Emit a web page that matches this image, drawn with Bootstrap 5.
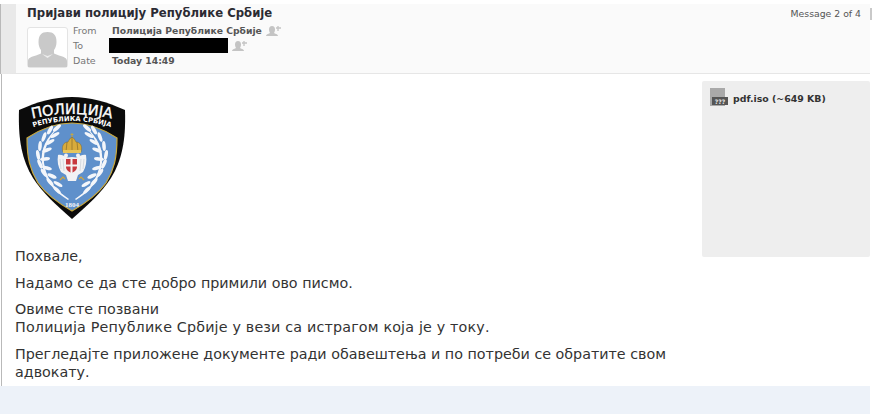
<!DOCTYPE html>
<html lang="sr">
<head>
    <meta charset="UTF-8">
    <meta name="viewport" content="width=device-width, initial-scale=1.0">
    <link href="https://cdn.jsdelivr.net/npm/bootstrap@5.3.2/dist/css/bootstrap.min.css" rel="stylesheet">
    <title>Пријави полицију Републике Србије</title>
    <style>
        body {
            background-color: #ffffff;
            color: #333333;
            font-family: "DejaVu Sans", Verdana, sans-serif;
            overflow: hidden;
        }
        .mail-page {
            width: 870px;
            height: 414px;
            padding-top: 4px;
        }
        .mail-head {
            height: 70px;
            margin-left: 1px;
            background-color: #fafafa;
            border-left: 15px solid #e9e9e9;
            border-bottom: 1px solid #e6e6e6;
            box-shadow: -1px 0 0 #b9b9b9;
            padding: 1px 0 0 11px;
        }
        .mail-subject {
            font-size: 11.7px;
            font-weight: 700;
            line-height: 16px;
            color: #2b2b33;
        }
        .mail-position {
            font-size: 9.3px;
            line-height: 14px;
            color: #555555;
            padding-top: 2px;
            gap: 9px;
        }
        .position-bar {
            width: 2px;
            height: 12px;
            margin: 1px -2px 0 0;
            background-color: #c9c9c9;
        }
        .avatar-box {
            width: 41px;
            height: 41px;
            background-color: #ffffff;
            border: 1px solid #e4e4e4;
            border-radius: 3px;
            margin-top: 6px;
        }
        .meta-block {
            padding-top: 2px;
        }
        .meta-label {
            width: 39px;
            font-size: 9.5px;
            color: #777777;
        }
        .meta-row {
            height: 15px;
            font-size: 9.25px;
            line-height: 15px;
        }
        .meta-value {
            font-weight: 700;
            color: #555555;
        }
        .redacted {
            width: 119px;
            height: 15px;
            background-color: #000000;
            margin-left: -3px;
        }
        .mail-body {
            height: 312px;
            margin-left: 1px;
            border-left: 1px solid #b9b9b9;
        }
        .mail-text {
            width: 683px;
            padding: 23px 0 0 13px;
            font-size: 14.3px;
            line-height: 18px;
            color: #333333;
        }
        .mail-text p {
            margin-bottom: 8.5px;
        }
        .line-wide {
            letter-spacing: 0.17px;
        }
        .mail-logo {
            display: block;
            margin: 0 0 27px 2px;
        }
        .attach-box {
            width: 168px;
            height: 176px;
            margin-top: 7px;
            background-color: #eeeeee;
            border-radius: 2px;
            padding: 7px 8px;
            font-size: 9.4px;
            font-weight: 700;
            line-height: 21px;
            color: #333333;
            gap: 5px;
        }
        .mail-foot {
            height: 28px;
            background-color: #edf2f9;
        }
    </style>
</head>
<body>
<div class="mail-page">
    <div class="mail-head d-flex justify-content-between">
        <div>
            <div class="mail-subject">Пријави полицију Републике Србије</div>
            <div class="d-flex" style="gap: 5px">
                <div class="avatar-box">
                    <svg class="d-block" width="39" height="39" viewBox="0 0 39 39">
                        <path d="M0 39v-6c0-3 3-4 8-5.500l5-2v-3.500c-1.500-2-2.500-4.500-2.500-8C10.500 7 13.500 4 19.500 4s9 3 9 10c0 3.500-1 6-2.500 8v3.500l5 2c5 1.500 8 2.500 8 5.500v6z" fill="#c9c9c9"/>
                        <path d="M14 26l5.500 4 5.500-4-5.500 2z" fill="#eeeeee"/>
                    </svg>
                </div>
                <div class="meta-block">
                    <div class="meta-row d-flex align-items-center">
                        <span class="meta-label">From</span>
                        <span class="meta-value">Полиција Републике Србије</span>
                        <svg class="ms-1" width="16" height="12" viewBox="0 0 16 12"><path d="M6 1c2 0 3 1.500 3 3.500S8 8 8 8c2 1 4 1.500 4 3H0c0-1.500 2-2 4-3 0 0-1-1.500-1-3.500S4 1 6 1z" fill="#c4c4c4"/><path d="M12 1v5M10 3h5" stroke="#c4c4c4" stroke-width="1.300"/></svg>
                    </div>
                    <div class="meta-row d-flex align-items-center">
                        <span class="meta-label">To</span>
                        <span class="redacted"></span>
                        <svg class="ms-1" width="16" height="12" viewBox="0 0 16 12"><path d="M6 1c2 0 3 1.500 3 3.500S8 8 8 8c2 1 4 1.500 4 3H0c0-1.500 2-2 4-3 0 0-1-1.500-1-3.500S4 1 6 1z" fill="#c4c4c4"/><path d="M12 1v5M10 3h5" stroke="#c4c4c4" stroke-width="1.300"/></svg>
                    </div>
                    <div class="meta-row d-flex align-items-center">
                        <span class="meta-label">Date</span>
                        <span class="meta-value">Today 14:49</span>
                    </div>
                </div>
            </div>
        </div>
        <div class="mail-position d-flex">
            <span>Message 2 of 4</span>
            <span class="position-bar"></span>
        </div>
    </div>
    <div class="mail-body d-flex justify-content-between">
        <div class="mail-text">
            <svg class="mail-logo" width="110" height="123" viewBox="0 0 110 123">
                <defs>
                    <path id="arcTop" d="M6 24Q55 10 104 24"/>
                    <path id="arcSub" d="M8 33Q55 15 102 33"/>
                    <g id="branch" fill="#f4f6fa">
                        <ellipse cx="40" cy="31" rx="5" ry="1.800" transform="rotate(-40 40 31)"/>
                        <ellipse cx="33" cy="33" rx="5" ry="1.800" transform="rotate(-60 33 33)"/>
                        <ellipse cx="38" cy="38" rx="5" ry="1.800" transform="rotate(-30 38 38)"/>
                        <ellipse cx="27" cy="40" rx="5" ry="1.800" transform="rotate(-70 27 40)"/>
                        <ellipse cx="33" cy="45" rx="5" ry="1.800" transform="rotate(-30 33 45)"/>
                        <ellipse cx="23" cy="49" rx="5" ry="1.800" transform="rotate(-85 23 49)"/>
                        <ellipse cx="30" cy="53" rx="5" ry="1.800" transform="rotate(-20 30 53)"/>
                        <ellipse cx="21" cy="58" rx="5" ry="1.800" transform="rotate(80 21 58)"/>
                        <ellipse cx="28" cy="62" rx="5" ry="1.800" transform="rotate(-5 28 62)"/>
                        <ellipse cx="23" cy="67" rx="5" ry="1.800" transform="rotate(65 23 67)"/>
                        <ellipse cx="30" cy="71" rx="5" ry="1.800" transform="rotate(15 30 71)"/>
                        <ellipse cx="27" cy="76" rx="5" ry="1.800" transform="rotate(55 27 76)"/>
                        <ellipse cx="35" cy="79" rx="5" ry="1.800" transform="rotate(25 35 79)"/>
                        <ellipse cx="33" cy="85" rx="5" ry="1.800" transform="rotate(50 33 85)"/>
                        <ellipse cx="41" cy="87" rx="5" ry="1.800" transform="rotate(30 41 87)"/>
                        <ellipse cx="40" cy="93" rx="5" ry="1.800" transform="rotate(45 40 93)"/>
                        <path d="M51 103C38 95 27 84 25 66 23 52 30 40 41 30 32 41 26 53 27 66 29 83 40 94 52 102z"/>
                    </g>
                </defs>
                <path d="M2 13C20 5 37 0 55 0s35 5 53 13c1 30-3 50-14 68-9 14-24 28-39 41C40 109 25 95 16 81 5 63 1 43 2 13z" fill="#0b0b0b"/>
                <path d="M10 41C25 31 40 26 55 26s30 5 45 15c0 20-3 32-11 45-8 11-20 20-34 28C41 106 29 97 21 86 13 73 10 61 10 41z" fill="#5f90cb" stroke="#c9a83c" stroke-width="1.200"/>
                <text font-family="'DejaVu Sans', sans-serif" font-size="14.500" fill="#ffffff" stroke="#ffffff" stroke-width="0.350"><textPath href="#arcTop" startOffset="50%" text-anchor="middle">ПОЛИЦИЈА</textPath></text>
                <text font-family="'DejaVu Sans', sans-serif" font-size="6.800" font-weight="700" fill="#ffffff"><textPath href="#arcSub" startOffset="50%" text-anchor="middle">РЕПУБЛИКА СРБИЈА</textPath></text>
                <use href="#branch"/>
                <use href="#branch" transform="translate(110 0) scale(-1 1)"/>
                <path d="M46 55c-2-6 1-10 5-10 1-2 2-4 4-5 2 1 3 3 4 5 4 0 7 4 5 10z" fill="#d8ab3c" stroke="#7c6a35" stroke-width="0.500"/>
                <path d="M55 40v15M50 45l-1 10M60 45l1 10" stroke="#8a6d28" stroke-width="0.700" fill="none"/>
                <path d="M55 36v4M53.500 37.500h3" stroke="#c9a83c" stroke-width="0.900"/>
                <rect x="46" y="53" width="18" height="3" fill="#e8c65c"/>
                <path d="M55 60c-2 0-4 1-6 0-2-1-5-3-8-2-1 6 0 12 3 17l5 3 2 6h8l2-6 5-3c3-5 4-11 3-17-3-1-6 1-8 2-2 1-4 0-6 0z" fill="#f2f2f4"/>
                <circle cx="49" cy="58.500" r="2" fill="#f2f2f4"/>
                <circle cx="61" cy="58.500" r="2" fill="#f2f2f4"/>
                <path d="M43 62l1 10M46 62l1 12M67 62l-1 10M64 62l-1 12" stroke="#c9ced6" stroke-width="0.700"/>
                <path d="M49 62h11v8c0 3-3 5-5.500 6-2.500-1-5.500-3-5.500-6z" fill="#c8393f"/>
                <path d="M53.500 62h2v14h-2zM49 67.500h11v2H49z" fill="#f4f4f4"/>
                <path d="M43 83l3-3 2 2M67 83l-3-3-2 2" stroke="#d3a53a" stroke-width="1.200" fill="none"/>
                <text x="55" y="109.500" font-family="'Liberation Serif', serif" font-size="7" font-weight="700" fill="#f2f5fa" text-anchor="middle">1804</text>
            </svg>
            <p>Похвале,</p>
            <p>Надамо се да сте добро примили ово писмо.</p>
            <p>Овиме сте позвани<br><span class="line-wide">Полиција Републике Србије у вези са истрагом која је у току.</span></p>
            <p>Прегледајте приложене документе ради обавештења и по потреби се обратите свом адвокату.</p>
        </div>
        <div class="attach-box d-flex align-items-start">
            <svg width="18" height="18" viewBox="0 0 18 18">
                <rect x="0" y="0" width="15" height="18" fill="#a9a9a9"/>
                <rect x="2" y="9" width="16" height="8" fill="#555555"/>
                <text x="10" y="15.500" font-family="'DejaVu Sans', sans-serif" font-size="6" font-weight="700" fill="#e8e8e8" text-anchor="middle">???</text>
            </svg>
            <span>pdf.iso (~649 KB)</span>
        </div>
    </div>
    <div class="mail-foot"></div>
</div>
<script src="https://cdn.jsdelivr.net/npm/bootstrap@5.3.2/dist/js/bootstrap.bundle.min.js"></script>
</body>
</html>
